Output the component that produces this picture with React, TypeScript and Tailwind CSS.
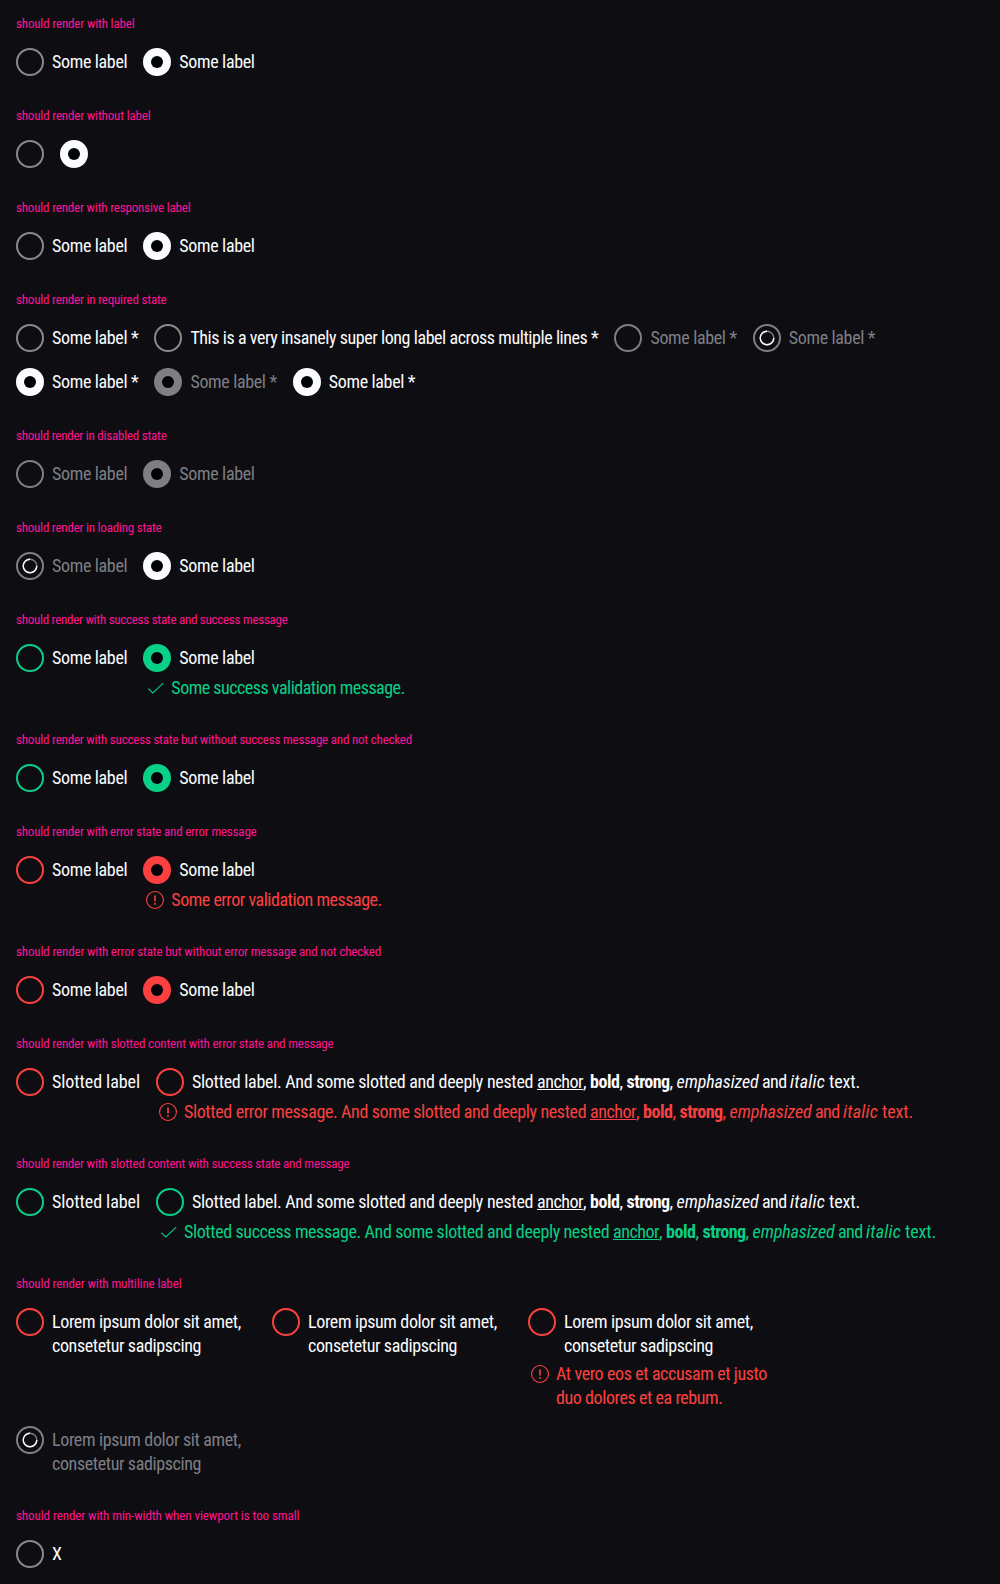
import { useLayoutEffect, useRef, useState, type ReactNode } from "react";

type Tone = "none" | "success" | "error";

/** Text tracked so that it spans exactly `w` pixels. */
function Fit({ w, children, className = "" }: { w: number; children: string; className?: string }) {
  const ref = useRef<HTMLSpanElement>(null);
  const [spacing, setSpacing] = useState(0);
  useLayoutEffect(() => {
    const el = ref.current;
    if (!el) return;
    el.style.letterSpacing = "0px";
    const natural = el.getBoundingClientRect().width;
    const next = (w - natural) / children.length;
    el.style.letterSpacing = `${next}px`;
    setSpacing(next);
  }, [w, children]);
  return (
    <span ref={ref} className={`whitespace-pre ${className}`} style={{ letterSpacing: `${spacing}px` }}>
      {children}
    </span>
  );
}

const ringColor = {
  none: "border-[#88898c]",
  success: "border-[#09d087]",
  error: "border-[#fc4040]",
};
const fillColor = {
  none: "bg-[#fbfcff]",
  success: "bg-[#09d087]",
  error: "bg-[#fc4040]",
};

function Spinner() {
  return (
    <svg viewBox="0 0 16 16" className="size-4" fill="none" strokeWidth="1.4">
      <circle cx="8" cy="8" r="6.8" stroke="#7e7f85" />
      <path d="M14.8 8A6.8 6.8 0 1 1 8 1.2" stroke="#fbfcff" />
    </svg>
  );
}

function Control({ tone, checked, disabled, loading }: { tone: Tone; checked?: boolean; disabled?: boolean; loading?: boolean }) {
  if (checked) {
    return (
      <span className={`flex size-7 shrink-0 items-center justify-center rounded-full ${disabled ? "bg-[#7e7f85]" : fillColor[tone]}`}>
        <span className="size-3 rounded-full bg-[#010205]" />
      </span>
    );
  }
  return (
    <span
      className={`flex size-7 shrink-0 items-center justify-center rounded-full border-2 ${disabled || loading ? "border-[#7e7f85]" : ringColor[tone]}`}
    >
      {loading && <Spinner />}
    </span>
  );
}

function MessageIcon({ tone }: { tone: Tone }) {
  return (
    <svg viewBox="0 0 24 24" className="size-6 shrink-0" fill="none" stroke="currentColor">
      {tone === "success" ? (
        <path d="M5.3 12.6 9.8 17 20.2 7.2" strokeWidth="1.05" />
      ) : (
        <>
          <circle cx="12" cy="12" r="8.45" strokeWidth="1.1" />
          <path d="M12 7.5v6M12 15v1.7" strokeWidth="1.6" />
        </>
      )}
    </svg>
  );
}

interface RadioProps {
  label?: ReactNode;
  tone?: Tone;
  checked?: boolean;
  disabled?: boolean;
  loading?: boolean;
  message?: ReactNode;
  wide?: boolean;
}

function Radio({ label, tone = "none", checked, disabled, loading, message, wide }: RadioProps) {
  return (
    <div className={`flex flex-col gap-1 ${wide ? "w-60" : ""}`}>
      <div className="flex items-start gap-2">
        <Control tone={tone} checked={checked} disabled={disabled} loading={loading} />
        {label && (
          <div className={`flex flex-col items-start pt-0.5 leading-6 ${disabled || loading ? "text-[#7e7f85]" : "text-[#fbfcff]"}`}>{label}</div>
        )}
      </div>
      {message && (
        <div className={`flex gap-1 leading-6 ${tone === "success" ? "text-[#09d087]" : "text-[#fc4040]"}`}>
          <MessageIcon tone={tone} />
          <div className="flex flex-col items-start">{message}</div>
        </div>
      )}
    </div>
  );
}

function Section({ title, w, children }: { title: string; w: number; children: ReactNode }) {
  return (
    <section className="flex flex-col gap-4">
      <h2 className="flex h-4 items-center text-[13px] leading-4 text-[#ff1493]">
        <Fit w={w}>{title}</Fit>
      </h2>
      <div className="flex flex-wrap items-start gap-4">{children}</div>
    </section>
  );
}

const some = <Fit w={75.3}>Some label</Fit>;
const someRequired = <Fit w={86.4}>Some label *</Fit>;
const slotted = <Fit w={88}>Slotted label</Fit>;
const lorem = (
  <>
    <Fit w={189}>Lorem ipsum dolor sit amet,</Fit>
    <Fit w={149}>consetetur sadipscing</Fit>
  </>
);

function Rich({ lead, w }: { lead: string; w: number }) {
  return (
    <p className="whitespace-pre">
      <Fit w={w}>{lead + " And some slotted and deeply nested "}</Fit>
      <a className="underline">
        <Fit w={45}>anchor</Fit>
      </a>
      <Fit w={7}>{", "}</Fit>
      <b className="font-bold">
        <Fit w={29.5}>bold</Fit>
      </b>
      <Fit w={7}>{", "}</Fit>
      <strong className="font-bold">
        <Fit w={43}>strong</Fit>
      </strong>
      <Fit w={7}>{", "}</Fit>
      <em>
        <Fit w={82}>emphasized</Fit>
      </em>
      <Fit w={31.5}>{" and "}</Fit>
      <i>
        <Fit w={35}>italic</Fit>
      </i>
      <Fit w={35}>{" text."}</Fit>
    </p>
  );
}

export default function App() {
  return (
    <main className="flex min-h-[1584px] flex-col gap-8 bg-[#0e0e12] p-4 font-['Roboto_Condensed',Roboto,sans-serif] text-[18px] font-[370] [font-stretch:75%]">
      <Section title="should render with label" w={118.5}>
        <Radio label={some} />
        <Radio label={some} checked />
      </Section>
      <Section title="should render without label" w={134.5}>
        <Radio />
        <Radio checked />
      </Section>
      <Section title="should render with responsive label" w={174.5}>
        <Radio label={some} />
        <Radio label={some} checked />
      </Section>
      <Section title="should render in required state" w={150.5}>
        <Radio label={someRequired} />
        <Radio label={<Fit w={408}>This is a very insanely super long label across multiple lines *</Fit>} />
        <Radio label={someRequired} disabled />
        <Radio label={someRequired} loading />
        <Radio label={someRequired} checked />
        <Radio label={someRequired} checked disabled />
        <Radio label={someRequired} checked />
      </Section>
      <Section title="should render in disabled state" w={150.5}>
        <Radio label={some} disabled />
        <Radio label={some} checked disabled />
      </Section>
      <Section title="should render in loading state" w={145.5}>
        <Radio label={some} loading />
        <Radio label={some} checked />
      </Section>
      <Section title="should render with success state and success message" w={271.5}>
        <Radio label={some} tone="success" />
        <Radio label={some} tone="success" checked message={<Fit w={233.5}>Some success validation message.</Fit>} />
      </Section>
      <Section title="should render with success state but without success message and not checked" w={396}>
        <Radio label={some} tone="success" />
        <Radio label={some} tone="success" checked />
      </Section>
      <Section title="should render with error state and error message" w={240.5}>
        <Radio label={some} tone="error" />
        <Radio label={some} tone="error" checked message={<Fit w={210.5}>Some error validation message.</Fit>} />
      </Section>
      <Section title="should render with error state but without error message and not checked" w={365}>
        <Radio label={some} tone="error" />
        <Radio label={some} tone="error" checked />
      </Section>
      <Section title="should render with slotted content with error state and message" w={317.5}>
        <Radio label={slotted} tone="error" />
        <Radio label={<Rich lead="Slotted label." w={345} />} tone="error" message={<Rich lead="Slotted error message." w={406} />} />
      </Section>
      <Section title="should render with slotted content with success state and message" w={333.5}>
        <Radio label={slotted} tone="success" />
        <Radio label={<Rich lead="Slotted label." w={345} />} tone="success" message={<Rich lead="Slotted success message." w={429} />} />
      </Section>
      <Section title="should render with multiline label" w={165.5}>
        <Radio wide label={lorem} tone="error" />
        <Radio wide label={lorem} tone="error" />
        <Radio
          wide
          label={lorem}
          tone="error"
          message={
            <>
              <Fit w={211}>At vero eos et accusam et justo</Fit>
              <Fit w={166.5}>duo dolores et ea rebum.</Fit>
            </>
          }
        />
        <Radio wide label={lorem} loading />
      </Section>
      <Section title="should render with min-width when viewport is too small" w={283.5}>
        <Radio label={<Fit w={9}>X</Fit>} />
      </Section>
    </main>
  );
}
